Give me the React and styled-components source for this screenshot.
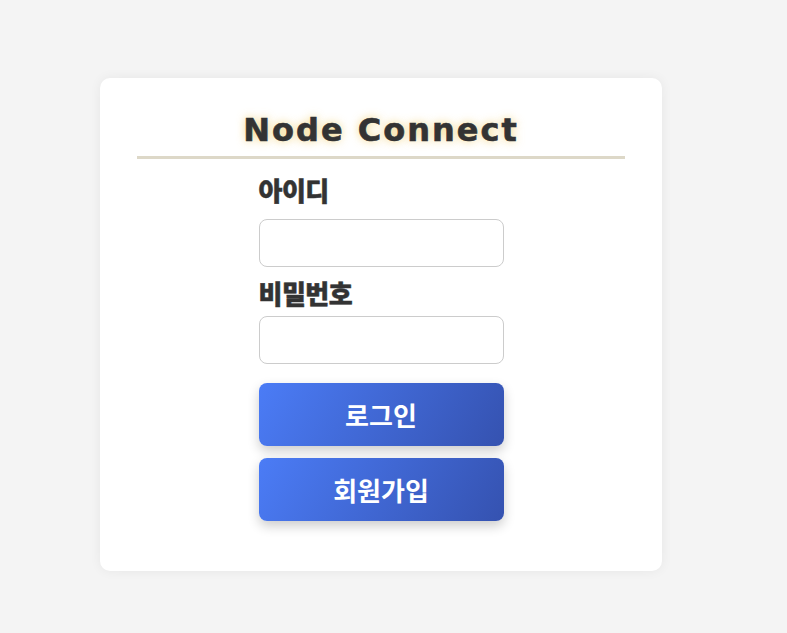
import React from 'react'
import styled, { createGlobalStyle } from 'styled-components'

const GlobalStyle = createGlobalStyle`
    body {
        margin: 0;
        background-color: #f4f4f4;
        font-family: "Noto Sans CJK KR", "Noto Sans", sans-serif;
    }
`

const Page = styled.div`
    min-height: 633px;
    padding: 78px 0 0 100px;
    box-sizing: border-box;
`

const Card = styled.div`
    width: 562px;
    box-sizing: border-box;
    padding: 0 37px 50px;
    background-color: white;
    border-radius: 10px;
    box-shadow: 0 0 12px rgba(0, 0, 0, 0.06);
`

const Title = styled.h1`
    margin: 0;
    padding-top: 34px;
    padding-bottom: 8px;
    text-align: center;
    font-family: "DejaVu Sans", "Liberation Sans", sans-serif;
    font-size: 32px;
    font-weight: 700;
    letter-spacing: 2px;
    line-height: 36px;
    color: #333;
    -webkit-text-stroke: 0.6px #333;
    text-shadow: 0 0 10px rgba(240, 200, 90, 0.75);
    border-bottom: 3px solid #ddd8c8;
`

const Form = styled.form`
    width: 245px;
    margin: 0 auto;
    display: flex;
    flex-direction: column;
`

const Label = styled.label`
    display: block;
    margin-top: ${(props) => props.top}px;
    margin-bottom: ${(props) => props.bottom}px;
    font-size: 26px;
    font-weight: 900;
    line-height: 28px;
    letter-spacing: -0.5px;
    color: #333;
    -webkit-text-stroke: 0.5px #333;
`

const Input = styled.input`
    width: 100%;
    height: 48px;
    box-sizing: border-box;
    border: 1px solid #ccc;
    border-radius: 8px;
    padding: 0 12px;
    font-size: 16px;
    outline: none;
`

const Button = styled.button`
    width: 100%;
    height: 63px;
    margin-top: ${(props) => props.top}px;
    border: none;
    border-radius: 8px;
    background: linear-gradient(120deg, #4b7cf6 0%, #3552b0 100%);
    color: white;
    font-family: "Noto Sans CJK KR", sans-serif;
    font-size: 26px;
    font-weight: 700;
    box-shadow: 0 5px 12px rgba(0, 0, 0, 0.2);
    cursor: pointer;
`

const App = () => {
    return (
        <>
            <GlobalStyle />
            <Page>
                <Card>
                    <Title>Node Connect</Title>
                    <Form onSubmit={(e) => e.preventDefault()}>
                        <Label htmlFor="id" top={17} bottom={15}>아이디</Label>
                        <Input id="id" type="text" />
                        <Label htmlFor="pw" top={12} bottom={9}>비밀번호</Label>
                        <Input id="pw" type="password" />
                        <Button type="submit" top={19}>로그인</Button>
                        <Button type="button" top={12}>회원가입</Button>
                    </Form>
                </Card>
            </Page>
        </>
    )
}

export default App
